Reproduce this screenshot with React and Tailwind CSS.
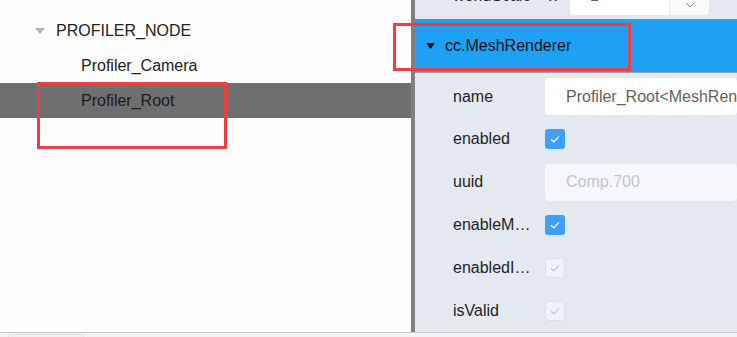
import React from "react";

const FONT = { fontFamily: '"Liberation Sans", Arial, sans-serif' };

function Check({ disabled }) {
  return (
    <svg width="12" height="10" viewBox="0 0 12 10" fill="none">
      <path
        d="M2 5.2 L4.8 7.8 L10 2.4"
        stroke={disabled ? "#c0c4cc" : "#ffffff"}
        strokeWidth="1.2"
      />
    </svg>
  );
}

function CheckBox({ disabled }) {
  return disabled ? (
    <div className="w-[20px] h-[20px] rounded-[3px] border border-[#dcdfe6] bg-[#edf2fc] flex items-center justify-center">
      <Check disabled />
    </div>
  ) : (
    <div className="w-[20px] h-[20px] rounded-[3px] bg-[#409eff] flex items-center justify-center">
      <Check />
    </div>
  );
}

const props = [
  { label: "name", type: "input", value: "Profiler_Root<MeshRenderer>" },
  { label: "enabled", type: "check" },
  { label: "uuid", type: "disabled", value: "Comp.700" },
  { label: "enableMultiMaterial", type: "check" },
  { label: "enabledInstancing", type: "check", disabled: true },
  { label: "isValid", type: "check", disabled: true },
];

function PropRow({ p }) {
  return (
    <div className="h-[42.8px] flex items-center pl-[38px]">
      <div className="w-[84px] truncate text-[16px] text-[#1f1f1f]">{p.label}</div>
      <div className="ml-[8px] flex-1 min-w-0">
        {p.type === "check" && <CheckBox disabled={p.disabled} />}
        {p.type === "input" && (
          <div className="h-[37px] bg-white rounded-[4px] pl-[21px] flex items-center text-[16px] text-[#606266] whitespace-nowrap overflow-hidden">
            {p.value}
          </div>
        )}
        {p.type === "disabled" && (
          <div className="h-[37px] bg-[#f5f7fa] rounded-[4px] pl-[21px] flex items-center text-[16px] text-[#c0c4cc] whitespace-nowrap overflow-hidden">
            {p.value}
          </div>
        )}
      </div>
    </div>
  );
}

export default function App() {
  return (
    <div className="w-[737px] h-[337px] overflow-hidden relative flex flex-col bg-white" style={FONT}>
      <div className="flex h-[332px]">
        {/* Node tree */}
        <div className="w-[411px] bg-[#fdfdfd] pt-[13px]">
          <div className="h-[35px] flex items-center pl-[35px]">
            <svg width="10" height="6" viewBox="0 0 10 6">
              <path d="M0 0 L10 0 L5 6 Z" fill="#b4b4b4" />
            </svg>
            <span className="ml-[11px] text-[16px] text-[#222]">PROFILER_NODE</span>
          </div>
          <div className="h-[35px] flex items-center pl-[81px] text-[16px] text-[#222]">
            Profiler_Camera
          </div>
          <div className="h-[35px] flex items-center pl-[81px] text-[16px] text-[#1c1c1c] bg-[#6f6f6f]">
            Profiler_Root
          </div>
        </div>

        {/* Divider */}
        <div className="w-[4px] bg-[#808080]" />

        {/* Inspector */}
        <div className="flex-1 bg-[#e4e8f1] overflow-hidden flex flex-col">
          <div className="h-[19px] overflow-hidden">
            <div className="h-[38px] mt-[-23px] flex items-center pl-[38px]">
              <div className="w-[84px] text-[16px] text-[#1f1f1f]">worldScale</div>
              <div className="ml-[12px] text-[16px] text-[#1f1f1f]">x</div>
              <div className="ml-[13px] flex h-[38px] rounded-[4px] bg-white overflow-hidden">
                <div className="w-[99px] pl-[20px] flex items-center text-[16px] text-[#606266]">1</div>
                <div className="w-[40px] bg-[#f9fafc] border-l border-[#e4e7ed] flex items-end justify-center pb-[7px]">
                  <svg width="10" height="6" viewBox="0 0 10 6" fill="none">
                    <path d="M1 1 L5 5 L9 1" stroke="#909399" strokeWidth="1" />
                  </svg>
                </div>
              </div>
            </div>
          </div>

          <div className="h-[55px] bg-[#1ea1f5] flex items-center pl-[11px] border-b border-[#9aa3ad]">
            <svg width="9" height="6" viewBox="0 0 9 6">
              <path d="M0 0 L9 0 L4.5 6 Z" fill="#111" />
            </svg>
            <span className="ml-[10px] text-[16px] text-[#111]">cc.MeshRenderer</span>
          </div>

          <div className="pt-[2px]">
            {props.map((p) => (
              <PropRow key={p.label} p={p} />
            ))}
          </div>
        </div>
      </div>

      {/* Bottom strip */}
      <div className="flex-1 bg-[#f4f4f4] border-t border-[#c6c6c6] pl-[8px] pt-[1px]">
        <div className="w-[76px] h-full bg-[#f0f0f0] border-t border-x border-[#e4e4e4] rounded-t-[2px]" />
      </div>

      {/* Annotation boxes */}
      <div className="absolute left-[37px] top-[82px] w-[190px] h-[67px] border-[3px] border-[#f23d3d]" />
      <div className="absolute left-[393px] top-[23px] w-[238px] h-[48px] border-[3px] border-[#f23d3d]" />
    </div>
  );
}
